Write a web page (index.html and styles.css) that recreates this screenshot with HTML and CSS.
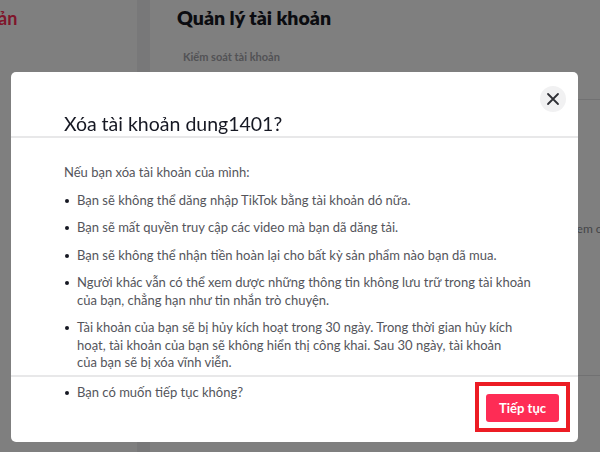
FILE: index.html
```html
<!DOCTYPE html>
<html lang="vi">
<head>
    <meta charset="UTF-8">
    <meta name="viewport" content="width=device-width, initial-scale=1.0">
    <title>Quản lý tài khoản</title>
    <link rel="stylesheet" href="styles.css">
</head>
<body>
    <div class="page">
        <aside class="sidebar">
            <a class="side-link" href="#">Quản lý tài khoản</a>
        </aside>
        <main class="main">
            <h1>Quản lý tài khoản</h1>
            <div class="tabs">
                <span class="tab">Kiểm soát tài khoản</span>
            </div>
            <div class="setting-row">
                <p class="setting-desc">Xóa vĩnh viễn tài khoản của bạn. Bạn có thể xem chi tiết</p>
            </div>
        </main>
    </div>

    <div class="mask">
        <div class="modal">
            <div class="modal-header">
                <h2>Xóa tài khoản dung1401?</h2>
                <button class="close-btn" aria-label="Đóng">
                    <svg width="14" height="14" viewBox="0 0 14 14">
                        <path d="M2 2 L12 12 M12 2 L2 12" stroke="#2f3036" stroke-width="1.8" stroke-linecap="round" fill="none"/>
                    </svg>
                </button>
            </div>
            <div class="modal-body">
                <p>Nếu bạn xóa tài khoản của mình:</p>
                <ul class="points">
                    <li>Bạn sẽ không thể dăng nhập TikTok bằng tài khoản dó nữa.</li>
                    <li>Bạn sẽ mất quyền truy cập các video mà bạn dã dăng tải.</li>
                    <li>Bạn sẽ không thể nhận tiền hoàn lại cho bất kỳ sản phẩm nào bạn dã mua.</li>
                    <li>Người khác vẫn có thể xem dược những thông tin không lưu trữ trong tài khoản của bạn, chẳng hạn như tin nhắn trò chuyện.</li>
                    <li>Tài khoản của bạn sẽ bị hủy kích hoạt trong 30 ngày. Trong thời gian hủy kích hoạt, tài khoản của bạn sẽ không hiển thị công khai. Sau 30 ngày, tài khoản<br>của bạn sẽ bị xóa vĩnh viễn.</li>
                </ul>
            </div>
            <div class="modal-footer">
                <ul class="points">
                    <li>Bạn có muốn tiếp tục không?</li>
                </ul>
                <div class="highlight">
                    <button class="next-btn">Tiếp tục</button>
                </div>
            </div>
        </div>
    </div>
</body>
</html>
```

FILE: styles.css
```css
body {
    margin: 0;
    font-family: Lato, "Liberation Sans", Arial, sans-serif;
    background-color: #fff;
    color: #161823;
    overflow: hidden;
}
.page {
    display: flex;
    height: 452px;
}
.sidebar {
    width: 137px;
    border-right: 13px solid #f1f1f2;
    flex-shrink: 0;
    overflow: hidden;
}
.side-link {
    display: block;
    white-space: nowrap;
    margin: 7px 0 0 -123px;
    color: #fe2c55;
    font-weight: bold;
    font-size: 18px;
    text-decoration: none;
}
.main {
    flex: 1;
    padding: 6px 0 0 27px;
    overflow: hidden;
}
.main h1 {
    margin: 0;
    font-size: 19.5px;
    line-height: 24px;
    font-weight: 800;
}
.tabs {
    margin-top: 15px;
    padding: 0 0 0 6px;
    height: 54px;
    border-bottom: 1px solid #e3e3e4;
}
.tab {
    font-size: 11px;
    font-weight: bold;
    color: #a5a5ab;
}
.setting-row {
    height: 154px;
    border-bottom: 1px solid #e3e3e4;
}
.setting-desc {
    margin: 121px 0 0 0;
    font-size: 12px;
    color: #8a8b91;
    white-space: nowrap;
    padding-left: 163px;
}

/* modal */
.mask {
    position: fixed;
    inset: 0;
    background-color: rgba(0, 0, 0, 0.5);
    padding: 72px 0 0 11px;
}
.modal {
    width: 567px;
    background-color: #fff;
    border-radius: 5px;
}
.modal-header {
    position: relative;
    padding: 39px 53px 0;
    border-bottom: 2px solid #e8e8e9;
}
.modal-header h2 {
    margin: 0;
    font-size: 19.5px;
    line-height: 25px;
    font-weight: normal;
    color: #161823;
}
.close-btn {
    position: absolute;
    top: 14px;
    right: 12px;
    width: 26px;
    height: 26px;
    border: none;
    border-radius: 50%;
    background-color: #f1f1f2;
    padding: 0;
    display: flex;
    align-items: center;
    justify-content: center;
    cursor: pointer;
}
.modal-body,
.modal-footer {
    font-size: 13px;
    line-height: 17.5px;
    color: #54555b;
}
.modal-body {
    padding: 26px 40px 3px 53px;
}
.modal-body p {
    margin: 0 0 10px;
}
.points {
    list-style: none;
    margin: 0;
    padding: 0;
}
.points li {
    position: relative;
    padding-left: 13px;
    margin-bottom: 10px;
}
.points li:last-child {
    margin-bottom: 0;
}
.points li::before {
    content: "";
    position: absolute;
    left: 1px;
    top: 7px;
    width: 4px;
    height: 4px;
    border-radius: 50%;
    background-color: #161823;
}
.modal-footer {
    display: flex;
    justify-content: space-between;
    align-items: flex-start;
    border-top: 2px solid #e8e8e9;
    padding-left: 53px;
}
.modal-footer .points {
    margin-top: 7px;
}
.highlight {
    border: 4px solid #ec1c24;
    padding: 8px 7px 6px;
    margin: 5px 8px 10px 0;
}
.next-btn {
    display: block;
    width: 73px;
    height: 28px;
    border: none;
    border-radius: 3px;
    background-color: #fe2c55;
    color: #fff;
    font-family: inherit;
    font-weight: bold;
    font-size: 13px;
    cursor: pointer;
}
```
